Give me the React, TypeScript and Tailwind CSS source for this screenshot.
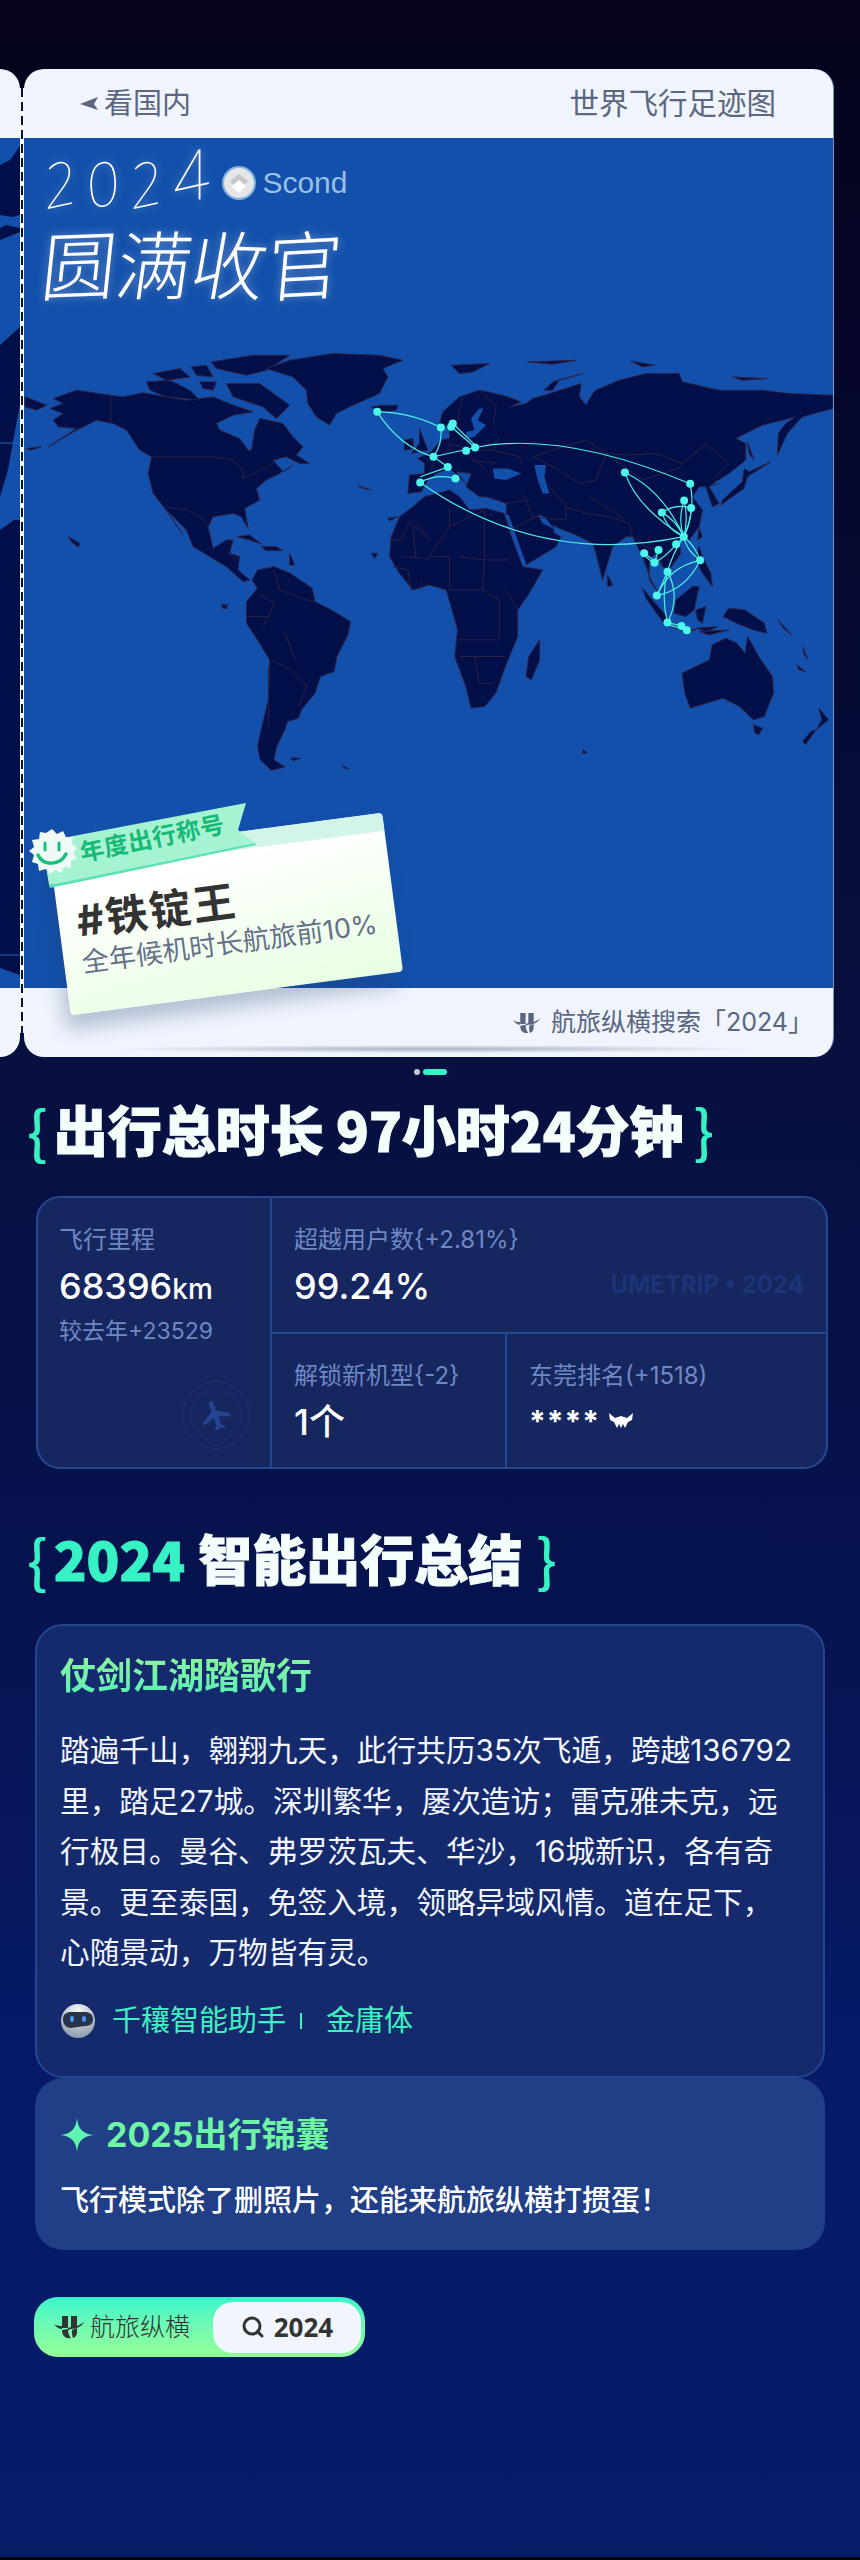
import { Search } from "lucide-react"
import { MdFlight } from "react-icons/md"

// coastlines traced in the coordinates of the reference crops
const westLand = [
  "M160 175L230 150L330 165L370 170L430 158L500 170L560 180L640 170L700 195L760 215L700 225L650 250L660 270L720 295L745 330L755 330L765 270L780 235L850 250L880 290L910 320L890 345L930 370L900 370L860 350L820 360L850 395L880 375L840 400L800 420L770 445L780 480L735 505L745 565L725 530L700 520L640 530L625 560L640 625L680 600L700 600L690 640L720 650L715 690L750 720L730 725L680 680L630 650L580 620L560 570L500 510L550 585L495 505L460 460L445 400L455 350L420 330L380 270L340 250L290 240L230 270L145 320L230 265L175 260L160 240L190 220L150 205L190 190Z",
  "M440 125L510 120L570 150L600 180L500 170L450 150Z",
  "M460 100L540 85L570 110L500 120Z",
  "M575 80L620 75L640 110L590 105Z",
  "M635 65L760 45L870 45L800 90L740 105L650 85Z",
  "M680 130L780 130L870 195L830 235L790 200L700 170Z",
  "M600 125L650 125L640 150L610 145Z",
  "M800 85L870 60L1000 40L1140 45L1210 60L1150 85L1165 110L1140 160L1060 195L1010 220L990 255L950 230L925 190L920 150L880 110Z",
  "M1115 200L1150 195L1195 195L1190 210L1150 215Z",
  "M712 590L750 585L785 612L750 600Z",
  "M785 620L830 620L850 632L800 632Z",
  "M75 170L140 195L110 210L75 200Z",
  "M80 325L125 320L90 330Z",
  "M205 590L240 610L235 622L215 605Z",
  "M665 795L685 795L675 805Z",
  "M1075 437L1115 450L1090 445Z",
  "M1165 535L1195 530L1170 542Z",
  "M1115 640L1135 640L1125 655Z",
  "M870 640L885 675L870 675Z",
]

const eastLand = [
  "M-65 460L-60 405L-15 400L-15 370L-35 355L5 335L35 300L60 295L60 265L30 250L40 215L90 170L150 150L220 165L275 185L240 200L290 190L310 175L345 165L455 130L450 170L470 195L490 160L500 150L570 120L650 100L750 100L760 125L870 150L1000 150L1080 160L1212 165L1212 205L1120 230L1110 240L1075 280L1045 345L1048 280L1070 250L1100 230L1000 255L920 295L950 310L950 360L900 400L860 425L840 440L870 490L850 500L830 440L810 440L790 470L820 510L810 560L780 600L750 600L755 640L720 690L700 680L680 640L660 660L660 720L695 770L665 720L640 650L610 590L590 590L550 620L520 720L500 640L490 610L440 585L390 565L370 555L375 580L395 590L380 620L290 675L275 640L232 545L230 490L170 470L150 470L110 440L125 400L80 395L112 432L60 385L20 400L-5 420L-25 455Z",
  "M-15 470L60 450L90 470L120 510L170 505L225 520L235 560L280 680L340 690L300 760L265 810L265 890L232 970L199 1060L166 1100L125 1105L109 1040L76 950L84 870L65 800L50 750L0 735L-50 750L-90 700L-120 650L-115 590L-90 530L-50 500Z",
  "M-30 265L-5 330L-55 340L-30 310Z",
  "M-75 300L-50 295L-48 325L-75 330Z",
  "M875 495L945 445L955 410L1025 365L960 395L945 385L940 425L880 480Z",
  "M955 305L975 360L960 340Z",
  "M65 75L180 70L130 95L90 100Z",
  "M345 150L370 125L460 100L390 120L370 150Z",
  "M295 65L440 60L370 72Z",
  "M605 62L675 75L640 80Z",
  "M910 110L1015 115L940 120Z",
  "M810 565L820 590L805 600Z",
  "M535 705L550 735L535 740Z",
  "M810 620L820 650L845 700L850 740L820 700L800 660Z",
  "M640 745L700 815L730 850L700 845L650 775Z",
  "M710 855L800 870L770 875Z",
  "M740 780L790 740L810 740L795 810L770 830L735 820Z",
  "M800 810L830 800L820 850L805 840Z",
  "M810 875L900 870L840 885Z",
  "M331 900L331 960L306 1020L290 1010L298 950Z",
]

const southLand = [
  "M470 30L500 20L530 40L570 85L575 125L610 155L640 185L635 225L615 290L610 335L585 350L575 400L550 450L545 475L525 485L520 510L505 560L500 600L520 622L495 632L475 600L470 560L478 500L490 420L492 300L470 240L450 190L450 125L470 85L460 60Z",
  "M1245 340L1295 300L1300 255L1325 235L1345 250L1360 280L1365 230L1385 290L1410 350L1412 400L1395 470L1375 480L1350 440L1320 415L1260 445L1250 400Z",
  "M1375 495L1392 505L1385 525L1378 520Z",
  "M1495 445L1512 480L1490 510L1500 480Z",
  "M1490 510L1470 555L1465 545L1480 515Z",
  "M1330 145L1360 150L1395 190L1400 220L1375 210L1345 190L1320 170Z",
  "M1270 205L1310 200L1290 215Z",
  "M1420 180L1445 225L1430 205Z",
  "M1465 260L1475 300L1468 285Z",
  "M1455 315L1470 335L1458 330Z",
  "M530 595L548 595L535 603Z",
  "M625 617L637 628L628 625Z",
  "M405 132L415 145L407 146Z",
  "M1065 570L1072 580L1063 580Z",
]

const seas = [
  "M110 275L135 270L125 235L150 205L162 205L145 240L170 255L135 290L110 295Z",
  "M190 385L235 385L275 400L230 420L195 415Z",
  "M315 375L350 375L345 410L360 460L340 460L325 420Z",
  "M325 525L345 530L375 568L340 550Z",
  "M228 525L238 525L290 672L280 678Z",
]

const westBorders = [
  "M455 350L640 350L700 360L730 390L730 415L800 385L840 350",
  "M333 165L333 250",
  "M495 500L560 510L600 530L625 555",
  "M680 640L720 660",
  "M1170 600L1205 600L1230 545L1290 600",
  "M1240 560L1250 655",
  "M1205 650L1290 655",
  "M1180 680L1225 690L1235 750",
  "M1265 720L1270 745",
]

const eastBorders = [
  "M60 500L60 560L0 650",
  "M0 590L-50 540",
  "M0 650L60 650L60 750",
  "M60 560L165 510L165 660L240 660",
  "M90 650L165 660L160 750L60 750",
  "M160 750L210 780L210 900L85 900",
  "M230 750L265 810",
  "M92 950L228 950",
  "M135 950L150 1030L195 1030",
  "M310 350L400 320L470 300L530 340L600 345L680 340L760 370L830 310L900 370L850 420",
  "M315 350L380 385L450 430L500 420L530 340",
  "M530 340L640 420L760 380",
  "M410 500L470 520L540 530L600 550L610 590",
  "M280 460L310 530L410 540L410 500L360 440",
  "M230 490L300 480",
  "M240 570L340 520",
  "M0 400L20 350L60 330L60 310L130 330L190 330L210 290",
  "M110 340L170 390",
  "M130 360L200 370",
  "M100 170L80 260",
  "M150 150L200 200L190 260",
  "M190 330L270 350L280 380",
  "M610 590L650 620L690 630L700 680",
  "M480 470L530 500L590 540",
  "M840 440L870 430",
]

const southBorders = [
  "M470 100L500 130L490 170L480 200",
  "M500 30L510 90L560 120L575 125",
  "M495 300L530 330L560 380L545 440",
  "M520 220L540 300",
  "M490 320L490 500",
  "M450 170L490 170",
]

const arcs = [
  "M-157 215Q-60 215 34 262",
  "M-157 215Q-90 320 12 350",
  "M34 262Q40 310 12 350",
  "M12 350L137 322",
  "M137 322Q400 270 783 431",
  "M-28 427Q330 680 764 590",
  "M-28 427Q20 400 78 415",
  "M-28 410L55 381",
  "M12 350L55 381",
  "M65 260L137 322",
  "M70 250L137 315",
  "M587 397Q700 450 764 590",
  "M587 397Q620 500 764 590",
  "M783 431Q800 510 764 590",
  "M765 481Q745 540 764 590",
  "M765 481Q778 540 764 590",
  "M786 504Q785 550 764 590",
  "M698 517Q715 570 764 590",
  "M698 517Q740 540 764 590",
  "M698 517Q740 490 786 504",
  "M764 590Q770 630 813 661",
  "M764 590Q800 620 813 661",
  "M764 590L741 613",
  "M741 613Q710 650 676 668",
  "M764 590Q730 640 715 695",
  "M645 640L676 662",
  "M645 646L676 672",
  "M688 630L676 668",
  "M813 661Q720 680 683 767",
  "M813 661Q770 750 683 767",
  "M715 695Q695 770 715 848",
  "M715 695Q755 770 715 848",
  "M715 695L683 767",
  "M715 848L757 858",
  "M715 854L773 871",
]

const nodes = [
  [-157, 215], [-28, 427], [34, 262], [70, 250], [65, 260], [137, 322], [110, 332], [12, 350],
  [55, 381], [78, 415], [587, 397], [783, 431], [765, 481], [786, 504], [698, 517], [764, 590],
  [741, 613], [688, 630], [645, 640], [676, 668], [813, 661], [715, 695], [683, 767], [715, 848],
  [757, 858], [773, 871],
]

const poem = [
  "踏遍千山，翱翔九天，此行共历35次飞遁，跨越136792",
  "里，踏足27城。深圳繁华，屡次造访；雷克雅未克，远",
  "行极目。曼谷、弗罗茨瓦夫、华沙，16城新识，各有奇",
  "景。更至泰国，免签入境，领略异域风情。道在足下，",
  "心随景动，万物皆有灵。",
]

function WorldMap() {
  return (
    <svg viewBox="24 138 810 850" className="block h-full w-full">
      <g fill="#020f48" stroke="#2c2247">
        <g transform="translate(0 340) scale(.3333)">
          {westLand.map((d) => (
            <path key={d} d={d} vectorEffect="non-scaling-stroke" />
          ))}
        </g>
        <g transform="translate(430 340) scale(.3333)">
          {eastLand.map((d) => (
            <path key={d} d={d} vectorEffect="non-scaling-stroke" />
          ))}
        </g>
        <g transform="translate(0 560) scale(.5485 .3333)">
          {southLand.map((d) => (
            <path key={d} d={d} vectorEffect="non-scaling-stroke" />
          ))}
        </g>
      </g>
      <g transform="translate(430 340) scale(.3333)" fill="#1250ab">
        {seas.map((d) => (
          <path key={d} d={d} />
        ))}
      </g>
      <g fill="none" stroke="#2c2247" strokeWidth="1">
        <g transform="translate(0 340) scale(.3333)">
          {westBorders.map((d) => (
            <path key={d} d={d} vectorEffect="non-scaling-stroke" />
          ))}
        </g>
        <g transform="translate(430 340) scale(.3333)">
          {eastBorders.map((d) => (
            <path key={d} d={d} vectorEffect="non-scaling-stroke" />
          ))}
        </g>
        <g transform="translate(0 560) scale(.5485 .3333)">
          {southBorders.map((d) => (
            <path key={d} d={d} vectorEffect="non-scaling-stroke" />
          ))}
        </g>
      </g>
      <g transform="translate(430 340) scale(.3333)">
        <g fill="none" stroke="#4ef0e6" strokeWidth="1.2">
          {arcs.map((d) => (
            <path key={d} d={d} vectorEffect="non-scaling-stroke" />
          ))}
        </g>
        <g fill="#4df5ea">
          {nodes.map(([x, y]) => (
            <circle key={`${x}-${y}`} cx={x} cy={y} r="12" />
          ))}
        </g>
      </g>
    </svg>
  )
}

function PreviousCardEdge() {
  return (
    <div className="flex w-[20px] shrink-0 flex-col overflow-hidden rounded-r-[20px] bg-[#eff4fd]">
      <div className="h-[69px] shrink-0" />
      <svg viewBox="0 138 20 850" className="block h-[850px] w-[20px] shrink-0">
        <rect x="0" y="138" width="20" height="850" fill="#1250ab" />
        <path d="M0 165L10 160L20 146L20 215L12 217L0 215Z" fill="#020f48" />
        <path d="M0 228L6 225L20 228L20 232L0 240Z" fill="#020f48" />
        <path d="M0 345L20 327L20 405L17 420L8 470L0 497Z" fill="#020f48" />
        <path d="M0 530L14 520L20 520L20 975L0 968Z" fill="#020f48" />
        <path d="M0 443H20" stroke="#1f62bd" />
        <path d="M0 955H20" stroke="#1f62bd" />
      </svg>
      <div className="flex-1" />
    </div>
  )
}

function Logo({ className }: { className: string }) {
  return (
    <svg viewBox="0 0 30 24" className={className} fill="currentColor">
      <path d="M8 1h6v12H8zM17 1h6v11l-6 1z" />
      <path d="M0 9c2 1.500 5 2 8 2v3C5 14 2 12 0 9zM30 7c-2 4-7 7-13 7l-3 1v-2l3-1c5 0 9-2 13-5z" />
      <path d="M8 15l6-1c0 4 1 7 3 9-5 1-9-2-9-8zM18 15l5-2v3c0 4-1 6-4 7-1-2-1-5-1-8z" />
    </svg>
  )
}

function TitleBadge() {
  return (
    <>
      <div className="absolute top-[765px] left-[35px] h-[160px] w-[335px] -rotate-[7.5deg] overflow-hidden rounded-[4px] bg-[linear-gradient(172deg,#ffffff_22%,#e9ffe3_95%)] shadow-[-6px_14px_18px_rgba(40,60,110,0.28)]">
        <div className="h-[18px] bg-[#d3f5e8]" />
        <div className="pt-[24px] pl-[18px] font-['Inter','Noto_Sans_CJK_SC',sans-serif]">
          <div className="text-[42px] leading-[52px] font-bold tracking-[2px] text-[#333333]">#铁锭王</div>
          <div className="-mt-[2px] text-[27px] leading-[36px] whitespace-nowrap text-[#66708a]">全年候机时长航旅前10%</div>
        </div>
      </div>
      <svg viewBox="0 0 220 90" className="absolute top-[733px] left-[24px] h-[90px] w-[220px] overflow-visible">
        <path d="M1 81L-6 38L198 -1L190 26L207 39Z" fill="#a6f3d2" transform="translate(0 2)" />
        <path d="M1 83L207 41L208 43L2 86Z" fill="#5de2b4" />
      </svg>
      <div className="absolute top-[754px] left-[55px] -rotate-[11.500deg] text-[24px] leading-[32px] font-bold tracking-[0.5px] whitespace-nowrap text-[#17b978]">
        年度出行称号
      </div>
      <svg viewBox="0 0 50 50" className="absolute top-[759px] left-[3px] h-[50px] w-[50px]">
        <path
          d="M25 1l5 5 6-3 3 6 7 0-1 7 5 4-4 5 4 5-6 3 0 7-7-1-3 6-6-3-5 4-4-5-7 2-1-7-6-2 2-7-5-4 5-4-2-7 7-1 1-7 6 1z"
          fill="#effaf6"
        />
        <path d="M18 15v7M32 15v7" stroke="#17c07f" strokeWidth="3" strokeLinecap="round" />
        <path d="M11 27c5 11 22 11 28-1" fill="none" stroke="#17c07f" strokeWidth="3.500" strokeLinecap="round" />
      </svg>
    </>
  )
}

function Handwriting() {
  return (
    <div className="absolute top-[78px] left-[18px] font-['Noto_Sans','Noto_Sans_CJK_SC',sans-serif] font-thin text-white [text-shadow:0_0_10px_rgba(255,255,255,0.4)]">
      <div className="flex h-[72px] items-center gap-[10px] text-[60px] leading-none italic">
        <span className="-rotate-[12deg]">2</span>
        <span className="-rotate-[12deg]">0</span>
        <span className="-rotate-[12deg]">2</span>
        <span className="-translate-y-[8px] -rotate-[12deg] text-[68px]">4</span>
        <span className="ml-[4px] flex items-center gap-[6px] text-[30px] font-normal text-[#9bc0e4] not-italic [text-shadow:none]">
          <svg viewBox="0 0 34 34" className="h-[34px] w-[34px]">
            <circle cx="17" cy="17" r="16" fill="#e4e6e8" stroke="#7fb0de" strokeWidth="2" />
            <path d="M17 8l9 7-9 11-9-11z" fill="#c5c7ca" />
            <path d="M17 14l7 6-7 7-7-7z" fill="#ffffff" />
          </svg>
          <span className="font-['Liberation_Sans',sans-serif]">Scond</span>
        </span>
      </div>
      <div className="flex text-[75px] leading-[92px] font-light">
        <span className="-rotate-[2deg] -skew-x-[8deg]">圆</span>
        <span className="-skew-x-[8deg]">满</span>
        <span className="rotate-[2deg] -skew-x-[8deg]">收</span>
        <span className="-rotate-[3deg] -skew-x-[8deg]">官</span>
      </div>
    </div>
  )
}

function StatLabel({ children }: { children: string }) {
  return <div className="text-[24px] leading-[32px] whitespace-nowrap text-[#6f88c4]">{children}</div>
}

function StatValue({ children }: { children: React.ReactNode }) {
  return <div className="mt-[7px] text-[36px] leading-[46px] font-medium whitespace-nowrap text-white">{children}</div>
}

function Brace({ children }: { children: string }) {
  return <span className="text-[58px] leading-[68px] font-medium [-webkit-text-stroke:0] text-[#37f2c4]">{children}</span>
}

export default function App() {
  return (
    <div className="flex h-[2560px] w-[860px] flex-col overflow-hidden bg-[linear-gradient(180deg,#04031a_0%,#05062a_14%,#071040_42%,#07134f_62%,#061a68_80%,#071d68_100%)] font-['Inter','Noto_Sans_CJK_SC',sans-serif]">
      <div className="flex h-[1057px] shrink-0 pt-[69px]">
        <PreviousCardEdge />
        <div className="mt-[19px] mb-[24px] w-[4px] shrink-0 border-x border-white bg-[repeating-linear-gradient(180deg,#020f48_0_9px,#ffffff_9px_14px)]" />
        <div className="relative flex w-[810px] shrink-0 flex-col rounded-[20px] border-r border-[#7f93bf] bg-[#eff4fd]">
          <div className="flex h-[69px] shrink-0 items-center justify-between pr-[57px] pl-[56px] text-[29.500px] text-[#5c667f]">
            <div className="flex items-center gap-[6px]">
              <svg viewBox="0 0 18 14" className="h-[14px] w-[18px]" fill="#5c667f">
                <path d="M0 7L18 0L14 7L18 13Z" />
              </svg>
              <span className="text-[29px]">看国内</span>
            </div>
            <span>世界飞行足迹图</span>
          </div>
          <div className="h-[850px] shrink-0 bg-[#1250ab]">
            <WorldMap />
          </div>
          <div className="relative flex h-[69px] shrink-0 items-center justify-end gap-[11px] overflow-hidden rounded-b-[20px] pr-[20px] text-[25px] text-[#5b6580]">
            <div className="absolute bottom-[4px] left-[90px] h-[8px] w-[640px] rounded-[50%] bg-[radial-gradient(ellipse,rgba(110,125,150,0.55),rgba(110,125,150,0)_72%)]" />
            <Logo className="h-[22px] w-[27px]" />
            <span>航旅纵横搜索「2024」</span>
          </div>
          <Handwriting />
          <TitleBadge />
        </div>
      </div>

      <div className="mt-[12px] flex justify-center gap-[3px]">
        <div className="h-[6px] w-[6px] rounded-full bg-[#c9cbd3]" />
        <div className="h-[6px] w-[24px] rounded-full bg-[#37f2c4]" />
      </div>

      <h2 className="mt-[20px] ml-[27px] flex h-[68px] items-center font-['Noto_Sans_CJK_SC',sans-serif] text-[54px] leading-[68px] font-black whitespace-nowrap text-[#f4fffb] [-webkit-text-stroke:1px_currentColor]">
        <Brace>{"{"}</Brace>
        <span className="ml-[6px]">出行总时长 97小时24分钟</span>
        <span className="ml-[10px]">
          <Brace>{"}"}</Brace>
        </span>
      </h2>

      <div className="mt-[33px] ml-[36px] grid h-[273px] w-[792px] shrink-0 grid-cols-[234px_235px_1fr] grid-rows-[136px_1fr] overflow-hidden rounded-[24px] border-2 border-[#24478f] bg-[#16265f]">
        <div className="relative row-span-2 border-r-2 border-[#24478f] pt-[26px] pl-[21px]">
          <StatLabel>飞行里程</StatLabel>
          <StatValue>
            68396<span className="text-[28px]">km</span>
          </StatValue>
          <div className="mt-[3px] text-[23px] leading-[32px] text-[#6f88c4]">较去年+23529</div>
          <div className="absolute top-[183px] left-[144px] flex h-[68px] w-[68px] items-center justify-center rounded-full border border-[#1e3675]">
            <div className="flex h-[52px] w-[52px] items-center justify-center rounded-full border border-[#1a2f6c]">
              <MdFlight className="-rotate-[20deg] text-[36px] text-[#24458f]" />
            </div>
          </div>
        </div>
        <div className="relative col-span-2 border-b-2 border-[#24478f] pt-[26px] pl-[22px]">
          <StatLabel>超越用户数{"{+2.81%}"}</StatLabel>
          <StatValue>99.24%</StatValue>
          <div className="absolute top-[71px] right-[22px] text-[24px] leading-[32px] font-bold whitespace-nowrap text-[#1d3478]">
            UMETRIP • 2024
          </div>
        </div>
        <div className="border-r-2 border-[#24478f] pt-[26px] pl-[22px]">
          <StatLabel>解锁新机型{"{-2}"}</StatLabel>
          <StatValue>1个</StatValue>
        </div>
        <div className="pt-[26px] pl-[22px]">
          <StatLabel>东莞排名(+1518)</StatLabel>
          <div className="mt-[9px] flex h-[40px] items-center gap-[8px] text-white">
            <span className="text-[30px] leading-none font-bold tracking-[1px]">****</span>
            <svg viewBox="0 0 26 16" className="h-[16px] w-[26px]" fill="#ffffff">
              <path d="M1 0L7 5L13 3L19 5L25 0L24 7L20 9L17 15L15 11L13 15L11 11L9 15L6 9L2 7Z" />
            </svg>
          </div>
        </div>
      </div>

      <h2 className="mt-[55px] ml-[27px] flex h-[68px] items-center font-['Noto_Sans_CJK_SC',sans-serif] text-[54px] leading-[68px] font-black whitespace-nowrap text-[#f4fffb] [-webkit-text-stroke:1px_currentColor]">
        <Brace>{"{"}</Brace>
        <span className="ml-[6px] text-[#37f2c4]">2024</span>
        <span className="ml-[13px]">智能出行总结</span>
        <span className="ml-[14px]">
          <Brace>{"}"}</Brace>
        </span>
      </h2>

      <div className="mt-[32px] ml-[35px] h-[454px] w-[790px] shrink-0 rounded-[28px] border-2 border-[#24468f] bg-[#152a6d] px-[23px] pt-[26px]">
        <div className="w-fit bg-linear-to-b from-[#8ff59a] to-[#4ff0b8] bg-clip-text text-[36px] leading-[48px] font-bold text-transparent">
          仗剑江湖踏歌行
        </div>
        <div className="mt-[25px] text-[29.700px] leading-[50.500px] whitespace-nowrap text-[#f2f6ff]">
          {poem.map((line) => (
            <div key={line}>{line}</div>
          ))}
        </div>
        <div className="mt-[23px] flex items-center text-[29px] leading-[40px] text-[#3ff0c0]">
          <svg viewBox="0 0 36 36" className="h-[36px] w-[36px] shrink-0">
            <defs>
              <radialGradient id="robot-shell" cx="50%" cy="20%" r="85%">
                <stop offset="0%" stopColor="#f4f7fa" />
                <stop offset="100%" stopColor="#8795a8" />
              </radialGradient>
            </defs>
            <circle cx="18" cy="18" r="17" fill="url(#robot-shell)" />
            <path d="M3 16c0-5 4-7 8-7h14c4 0 8 2 8 7s-3 7-8 7l-14 2c-5 0-8-4-8-9z" fill="#2a3448" />
            <ellipse cx="12" cy="16" rx="2" ry="3" fill="#3f9bff" />
            <ellipse cx="24" cy="16" rx="2" ry="3" fill="#3f9bff" />
          </svg>
          <span className="ml-[16px]">千穰智能助手</span>
          <div className="mx-[14px] h-[16px] w-[2px] bg-[#3ff0c0]" />
          <span className="ml-[10px]">金庸体</span>
        </div>
      </div>

      <div className="ml-[35px] h-[172px] w-[790px] shrink-0 rounded-[28px] bg-[#213f86] px-[25px] pt-[34px]">
        <div className="flex items-center gap-[12px] text-[34px] leading-[46px] font-bold text-[#6ff5a5]">
          <svg viewBox="0 0 34 34" className="h-[34px] w-[34px]" fill="#5ff5b0">
            <path d="M17 0C18 11 23 16 34 17 23 18 18 23 17 34 16 23 11 18 0 17 11 16 16 11 17 0Z" />
          </svg>
          <span>2025出行锦囊</span>
        </div>
        <div className="mt-[23px] text-[29px] leading-[40px] font-medium whitespace-nowrap text-white">
          飞行模式除了删照片，还能来航旅纵横打掼蛋！
        </div>
      </div>

      <div className="mt-[47px] ml-[34px] flex h-[60px] w-[331px] shrink-0 items-center justify-between rounded-[24px] bg-linear-to-b from-[#36f5cc] to-[#96ff96] pr-[4px] pl-[20px] text-[#333333]">
        <div className="flex items-center gap-[6px]">
          <Logo className="h-[24px] w-[30px]" />
          <span className="text-[25px] leading-none font-light">航旅纵横</span>
        </div>
        <div className="flex h-[51px] w-[148px] items-center justify-center gap-[9px] rounded-[20px] bg-[#f1f5fd]">
          <Search className="h-[24px] w-[24px]" strokeWidth={3} />
          <span className="font-['Noto_Sans',sans-serif] text-[26px] font-bold">2024</span>
        </div>
      </div>

      <div className="mt-auto h-[3px] shrink-0 bg-[#02020f]" />
    </div>
  )
}
